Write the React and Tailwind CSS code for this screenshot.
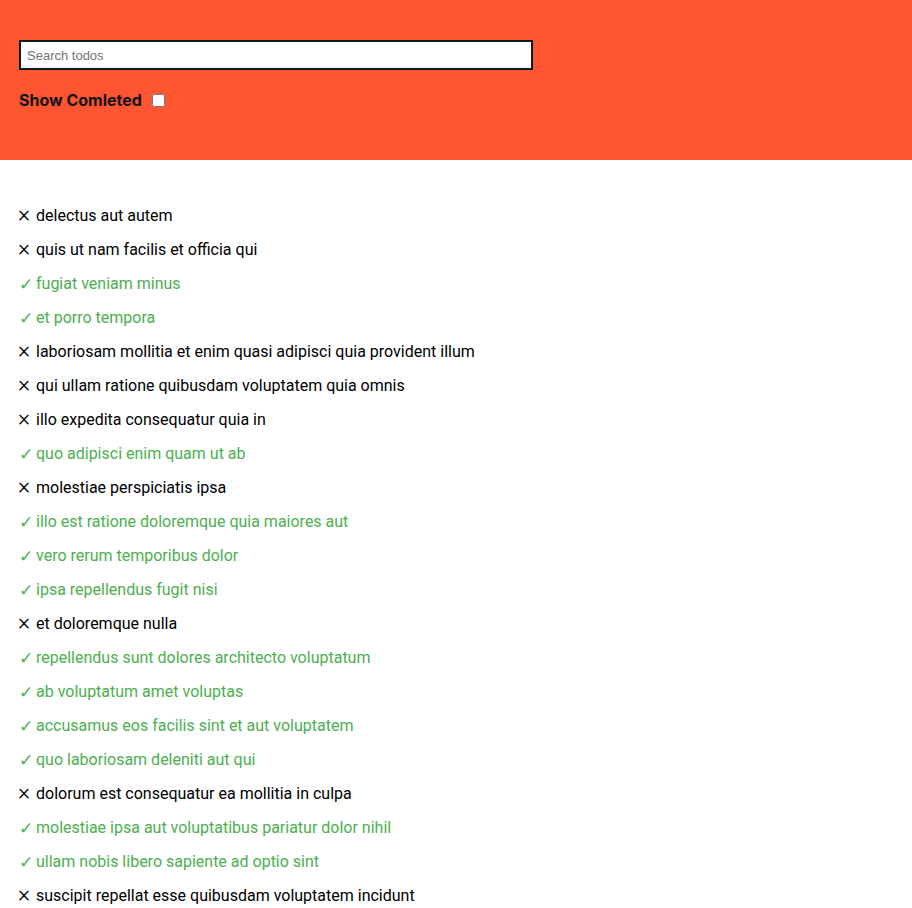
import React, { useState } from "react";

const todos = [
  { title: "delectus aut autem", completed: false },
  { title: "quis ut nam facilis et officia qui", completed: false },
  { title: "fugiat veniam minus", completed: true },
  { title: "et porro tempora", completed: true },
  { title: "laboriosam mollitia et enim quasi adipisci quia provident illum", completed: false },
  { title: "qui ullam ratione quibusdam voluptatem quia omnis", completed: false },
  { title: "illo expedita consequatur quia in", completed: false },
  { title: "quo adipisci enim quam ut ab", completed: true },
  { title: "molestiae perspiciatis ipsa", completed: false },
  { title: "illo est ratione doloremque quia maiores aut", completed: true },
  { title: "vero rerum temporibus dolor", completed: true },
  { title: "ipsa repellendus fugit nisi", completed: true },
  { title: "et doloremque nulla", completed: false },
  { title: "repellendus sunt dolores architecto voluptatum", completed: true },
  { title: "ab voluptatum amet voluptas", completed: true },
  { title: "accusamus eos facilis sint et aut voluptatem", completed: true },
  { title: "quo laboriosam deleniti aut qui", completed: true },
  { title: "dolorum est consequatur ea mollitia in culpa", completed: false },
  { title: "molestiae ipsa aut voluptatibus pariatur dolor nihil", completed: true },
  { title: "ullam nobis libero sapiente ad optio sint", completed: true },
  { title: "suscipit repellat esse quibusdam voluptatem incidunt", completed: false },
];

const App = () => {
  const [search, setSearch] = useState("");
  const [showCompleted, setShowCompleted] = useState(false);

  const visible = todos.filter((t) =>
    t.title.toLowerCase().includes(search.toLowerCase())
  );

  return (
    <div className="font-['Roboto',sans-serif] text-black">
      {/* Header */}
      <div className="bg-[#ff5530] h-[160px] px-[19px] pt-[40px]">
        <input
          value={search}
          onChange={(e) => setSearch(e.target.value)}
          placeholder="Search todos"
          className="block w-[514px] h-[30px] bg-white border-2 border-[#0b1a1c] px-[6px] text-[13px] font-['Liberation_Sans',sans-serif] placeholder:text-[#757575] outline-none"
        />
        <label className="flex items-center mt-[18px] text-[16px] font-bold text-[#111] font-['Inter',sans-serif]">
          Show Comleted
          <input
            type="checkbox"
            checked={showCompleted}
            onChange={(e) => setShowCompleted(e.target.checked)}
            className="ml-[10px] w-[13px] h-[13px]"
          />
        </label>
      </div>

      {/* List */}
      <ul className="px-[19px] pt-[44px]">
        {visible.map((t, i) => (
          <li
            key={i}
            className={`h-[34px] leading-[24px] text-[16px] ${
              t.completed ? "text-[#4caf50]" : "text-black"
            }`}
          >
            {t.completed ? (
              <span className="inline-block w-[17px] font-['DejaVu_Sans',sans-serif] font-extralight text-[17px] leading-[24px] align-top">
                ✓
              </span>
            ) : (
              <span className="inline-block w-[17px] -ml-[1px] mr-[1px] -translate-y-[1px] font-['Roboto',sans-serif] font-light text-[23px] leading-[24px] align-top">
                ×
              </span>
            )}
            {t.title}
          </li>
        ))}
      </ul>
    </div>
  );
};

export default App;
